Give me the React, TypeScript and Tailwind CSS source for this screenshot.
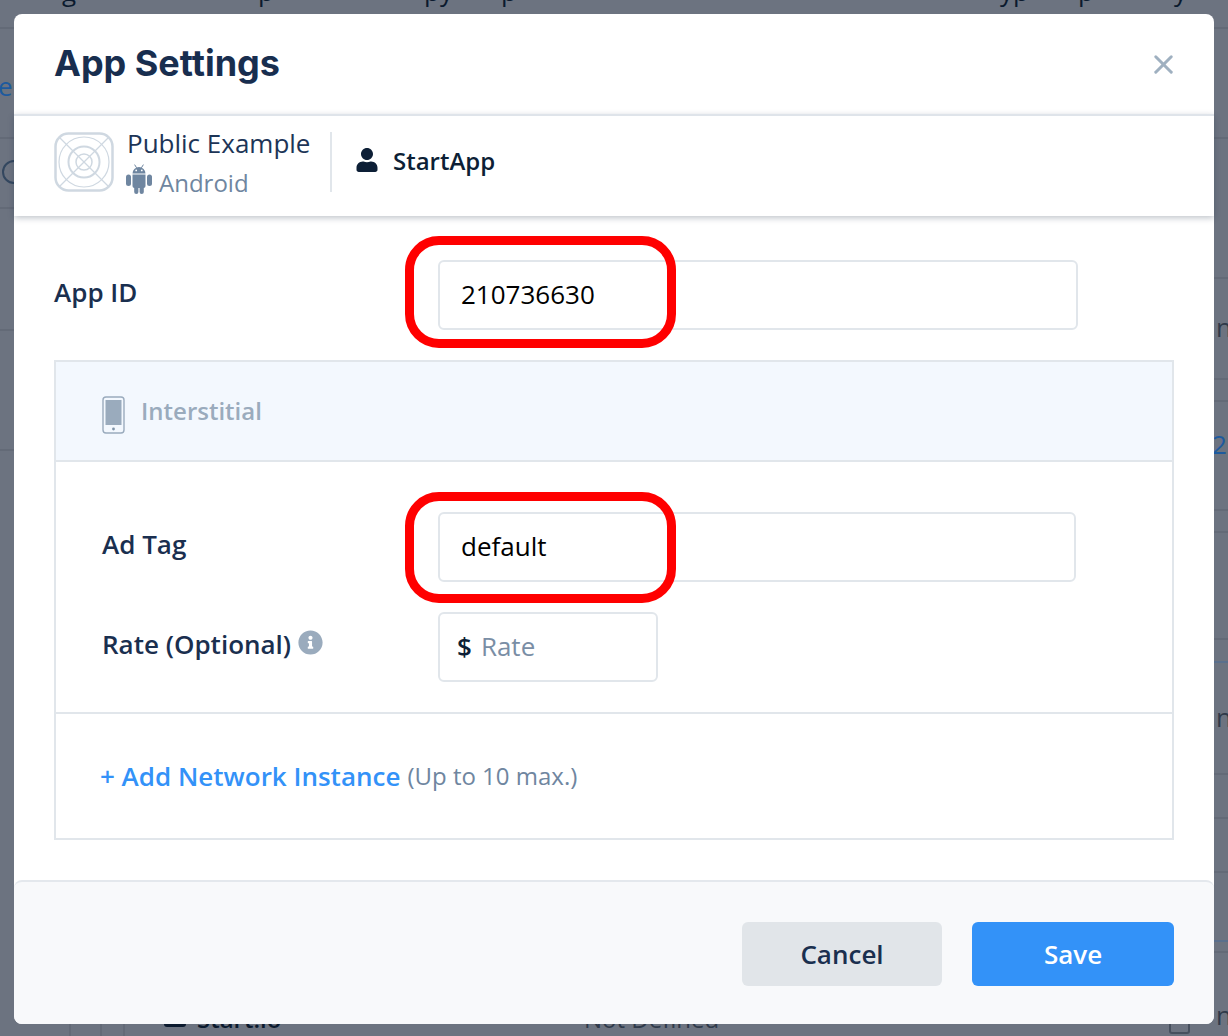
import React from 'react';
import { FaUser, FaInfoCircle } from 'react-icons/fa';
import { X } from 'lucide-react';

const AppIcon = () => (
  <svg width="60" height="60" viewBox="0 0 60 60" fill="none" stroke="#cfd8e1" className="shrink-0">
    <rect x="1.5" y="1.5" width="57" height="57" rx="13" strokeWidth="2.5" />
    <g strokeWidth="1.2">
      <line x1="6" y1="6" x2="54" y2="54" />
      <line x1="54" y1="6" x2="6" y2="54" />
      <circle cx="30" cy="30" r="25" />
    </g>
    <circle cx="30" cy="30" r="15.5" strokeWidth="2" />
    <circle cx="30" cy="30" r="8" strokeWidth="1.5" />
  </svg>
);

const AndroidIcon = () => (
  <svg width="26" height="30" viewBox="0 0 26 30" fill="#6f86a0" className="shrink-0 ml-[-1px] mt-[-6px]">
    <path d="M6.5 9.5a6.5 6.5 0 0 1 13 0z" />
    <path d="M8.6 0.6l2 3.2M17.4 0.6l-2 3.2" stroke="#6f86a0" strokeWidth="1" />
    <circle cx="10.2" cy="6.4" r="0.9" fill="#fff" />
    <circle cx="15.8" cy="6.4" r="0.9" fill="#fff" />
    <path d="M6.5 10.5h13v11.5a2 2 0 0 1-2 2h-9a2 2 0 0 1-2-2z" />
    <rect x="0" y="10.5" width="5" height="11.5" rx="2.5" />
    <rect x="21" y="10.5" width="5" height="11.5" rx="2.5" />
    <rect x="8.2" y="22" width="4.2" height="8" rx="2.1" />
    <rect x="13.6" y="22" width="4.2" height="8" rx="2.1" />
  </svg>
);

const PhoneIcon = () => (
  <svg width="24" height="38" viewBox="0 0 24 38" fill="none" className="shrink-0">
    <rect x="1" y="1" width="21" height="36" rx="3" stroke="#9aabbd" strokeWidth="1.4" />
    <rect x="3.5" y="4" width="16" height="25" fill="#9aabbd" />
    <circle cx="11.5" cy="33" r="1.4" fill="#7f93a8" />
  </svg>
);

// row rules of the dimmed page, only seen in the strips beside the dialog
const leftRules = [27, 137, 207, 329, 449];
const rightRules = [27, 137, 277, 378, 400, 509, 531, 638, 773, 817, 871, 951];
const rightBlueRules = [661, 940];

const Backdrop = () => (
  <div className="absolute inset-0 bg-[#6c7380] overflow-hidden text-[26px] text-[#2f3a4a]">
    {leftRules.map((y) => (
      <div key={y} className="absolute left-0 w-[14px] h-[2px] bg-[#636a77]" style={{ top: y }} />
    ))}
    {rightRules.map((y) => (
      <div key={y} className="absolute right-0 w-[14px] h-[2px] bg-[#636a77]" style={{ top: y }} />
    ))}
    {rightBlueRules.map((y) => (
      <div key={y} className="absolute right-0 w-[14px] h-[2px] bg-[#5a6f8c]" style={{ top: y }} />
    ))}
    <span className="absolute left-[62px] top-[-28px] text-[#0b1a2e]">g</span>
    <span className="absolute left-[258px] top-[-28px] text-[#0b1a2e]">p</span>
    <span className="absolute left-[424px] top-[-28px] text-[#0b1a2e]">py</span>
    <span className="absolute left-[501px] top-[-28px] text-[#0b1a2e]">p</span>
    <span className="absolute left-[1000px] top-[-28px] text-[#0b1a2e]">yp</span>
    <span className="absolute left-[1078px] top-[-28px] text-[#0b1a2e]">p</span>
    <span className="absolute left-[1174px] top-[-28px] text-[#0b1a2e]">y</span>
    <span className="absolute left-[-2px] top-[67px] text-[#1d5a9e]">e</span>
    <div className="absolute left-[2px] top-[160px] w-[24px] h-[24px] rounded-full border-2 border-[#33475f]" />
    <span className="absolute left-[1216px] top-[308px]">na</span>
    <span className="absolute left-[1212px] top-[425px] text-[#1d5a9e]">2</span>
    <span className="absolute left-[1216px] top-[698px]">na</span>
    <span className="absolute left-[1216px] top-[996px]">na</span>
    <div className="absolute left-[164px] top-[1010px] w-[22px] h-[17px] rounded-[3px] bg-[#0b1a2e]" />
    <span className="absolute left-[197px] top-[1001px] text-[24px] font-semibold text-[#0b1a2e]">Start.io</span>
    <span className="absolute left-[584px] top-[1001px] text-[24px]">Not Defined</span>
    <div className="absolute left-[69px] top-[1024px] w-[2px] h-[12px] bg-[#636a77]" />
    <div className="absolute left-[100px] top-[1024px] w-[2px] h-[12px] bg-[#636a77]" />
    <div className="absolute left-[123px] top-[1024px] w-[2px] h-[12px] bg-[#636a77]" />
    <div className="absolute left-[1169px] top-[1016px] w-[21px] h-[18px] rounded-[3px] border-2 border-[#47505e]" />
  </div>
);

export default function App() {
  return (
    <div className="relative w-[1228px] h-[1036px] overflow-hidden font-['Open_Sans',sans-serif] text-[26px] text-[#1a2f4f]">
      <Backdrop />
      <div className="relative pt-[14px] px-[14px]">
        <div className="w-[1200px] h-[1010px] bg-white rounded-[8px] flex flex-col">
          {/* Title */}
          <div className="h-[100px] shrink-0 flex items-center justify-between pl-[40px] pr-[35px]">
            <h1 className="font-['Inter',sans-serif] font-bold text-[36px] leading-none mb-[2px] text-[#182e4f]">App Settings</h1>
            <X size={31} strokeWidth={2.3} className="text-[#9fb0c0]" />
          </div>

          {/* App info */}
          <div className="h-[102px] shrink-0 flex items-center pl-[40px] pb-[8px] border-t-2 border-[#dfe4ea] shadow-[0_2px_6px_rgba(30,45,70,0.28)] z-10 bg-white">
            <AppIcon />
            <div className="ml-[13px] mt-[2px] w-[203px] flex flex-col">
              <div className="leading-[34px] text-[#1d3557]">Public Example</div>
              <div className="flex items-center leading-[34px] mt-[4px] text-[#6f86a0]">
                <AndroidIcon />
                <span className="ml-[7px] mt-[2px] text-[24px]">Android</span>
              </div>
            </div>
            <div className="w-[2px] h-[60px] bg-[#e1e6eb]" />
            <FaUser size={24} className="ml-[23px] mt-[-5px] text-[#0d1f36]" />
            <span className="ml-[14px] mt-[-3px] font-semibold text-[#0d1f36] text-[24px]">StartApp</span>
          </div>

          {/* Body */}
          <div className="flex-1 px-[40px] pt-[44px]">
            <div className="flex items-center h-[70px]">
              <label className="w-[384px] font-semibold mt-[-6px] text-[#1a2f4f]">App ID</label>
              <div className="relative w-[640px] h-[70px]">
                <input readOnly value="210736630" className="w-full h-full px-[21px] pb-[2px] border-2 border-[#e1e6eb] rounded-[6px] text-black outline-none" />
                <div className="absolute left-[-33px] top-[-24px] w-[271px] h-[112px] border-[9px] border-[#ff0000] rounded-[34px] pointer-events-none" />
              </div>
            </div>

            <div className="mt-[30px] w-[1120px] h-[480px] border-2 border-[#e1e6eb] flex flex-col">
              <div className="h-[100px] shrink-0 bg-[#f3f8fe] border-b-2 border-[#e1e6eb] flex items-center pl-[46px]">
                <div className="mt-[7px]">
                  <PhoneIcon />
                </div>
                <span className="ml-[15px] font-semibold text-[24px] text-[#9aabbd]">Interstitial</span>
              </div>

              <div className="h-[252px] shrink-0 border-b-2 border-[#e1e6eb] pl-[46px] pt-[50px]">
                <div className="flex items-center h-[70px]">
                  <label className="w-[336px] font-semibold mt-[-6px]">Ad Tag</label>
                  <div className="relative w-[638px] h-[70px]">
                    <input readOnly value="default" className="w-full h-full px-[21px] pb-[2px] border-2 border-[#e1e6eb] rounded-[6px] text-black outline-none" />
                    <div className="absolute left-[-33px] top-[-20px] w-[271px] h-[111px] border-[9px] border-[#ff0000] rounded-[34px] pointer-events-none" />
                  </div>
                </div>
                <div className="flex items-center h-[70px] mt-[30px]">
                  <div className="w-[336px] flex items-center mt-[-6px]">
                    <label className="font-semibold">Rate (Optional)</label>
                    <FaInfoCircle size={25} className="ml-[7px] mt-[-4px] text-[#9aabbd]" />
                  </div>
                  <div className="w-[220px] h-[70px] border-2 border-[#e1e6eb] rounded-[6px] flex items-center pl-[17px] pb-[2px]">
                    <span className="font-semibold text-[#0d1f36]">$</span>
                    <input readOnly placeholder="Rate" className="ml-[9px] w-[140px] outline-none placeholder:text-[#7a8ea5]" />
                  </div>
                </div>
              </div>

              <div className="flex-1 flex items-center pl-[44px]">
                <span className="font-semibold text-[#3392f8]">+ Add Network Instance</span>
                <span className="ml-[7px] text-[24px] text-[#6f86a0]">(Up to 10 max.)</span>
              </div>
            </div>
          </div>

          {/* Footer */}
          <div className="h-[144px] shrink-0 bg-[#f8f9fb] border-t-2 border-[#e4e8ed] rounded-[8px] flex items-center justify-end pr-[40px] pt-[2px] gap-[30px]">
            <button className="w-[200px] h-[64px] rounded-[6px] bg-[#e1e5e9] font-semibold text-[#1a2f4f]">Cancel</button>
            <button className="w-[202px] h-[64px] rounded-[6px] bg-[#3392f8] font-semibold text-white">Save</button>
          </div>
        </div>
      </div>
    </div>
  );
}
